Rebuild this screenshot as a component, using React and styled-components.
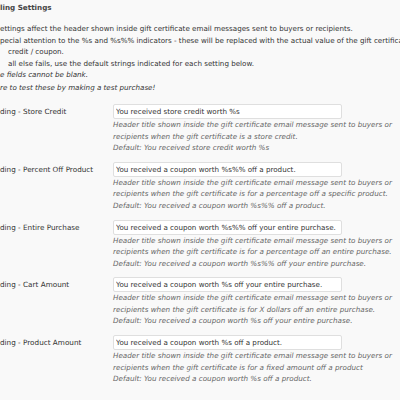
import React from 'react';
import styled, {createGlobalStyle} from 'styled-components';

const Global = createGlobalStyle`
    body {
        margin: 0;
        background: #f9f9f9;
        font-family: "DejaVu Sans", Verdana, sans-serif;
        color: #333;
        overflow: hidden;
    }
`;

const Page = styled.div`
    width: 400px;
    height: 400px;
    overflow: hidden;
    white-space: nowrap;
    padding-top: 2px;
    box-sizing: border-box;
`;

const Title = styled.h3`
    margin: 0;
    font-size: 7.2px;
    line-height: 12px;
    font-weight: bold;
    color: #464646;
`;

const Notes = styled.div`
    margin-top: 9px;
    font-size: 7.15px;
`;

const Note = styled.div`
    line-height: 11.6px;
    padding-left: ${({indent}) => indent || 0}px;
    font-style: ${({italic}) => italic ? 'italic' : 'normal'};
    margin-top: ${({gap}) => gap || 0}px;
`;

const Rows = styled.div`
    margin-top: 10px;
    display: flex;
    flex-direction: column;
    gap: 8.3px;
`;

const Row = styled.div`
    display: grid;
    grid-template-columns: 113px 1fr;
    align-items: start;
`;

const Label = styled.label`
    font-size: 7.25px;
    line-height: 15px;
    color: #333;
`;

const Field = styled.div`
    display: flex;
    flex-direction: column;
`;

const Input = styled.input`
    box-sizing: border-box;
    width: 229px;
    height: 15px;
    margin: 0;
    padding: 0 2px;
    border: 1px solid #dfdfdf;
    border-radius: 2px;
    background: #fff;
    font-family: "DejaVu Sans", Verdana, sans-serif;
    font-size: 7.15px;
    color: #333;
    outline: none;
`;

const Desc = styled.div`
    font-size: 7.2px;
    line-height: 11.5px;
    font-style: italic;
    color: #666;
`;

const rows = [
    {
        label: 'ding - Store Credit',
        value: 'You received store credit worth %s',
        line2: 'recipients when the gift certificate is a store credit.',
        def: 'Default: You received store credit worth %s',
    },
    {
        label: 'ding - Percent Off Product',
        value: 'You received a coupon worth %s%% off a product.',
        line2: 'recipients when the gift certificate is for a percentage off a specific product.',
        def: 'Default: You received a coupon worth %s%% off a product.',
    },
    {
        label: 'ding - Entire Purchase',
        value: 'You received a coupon worth %s%% off your entire purchase.',
        line2: 'recipients when the gift certificate is for a percentage off an entire purchase.',
        def: 'Default: You received a coupon worth %s%% off your entire purchase.',
    },
    {
        label: 'ding - Cart Amount',
        value: 'You received a coupon worth %s off your entire purchase.',
        line2: 'recipients when the gift certificate is for X dollars off an entire purchase.',
        def: 'Default: You received a coupon worth %s off your entire purchase.',
    },
    {
        label: 'ding - Product Amount',
        value: 'You received a coupon worth %s off a product.',
        line2: 'recipients when the gift certificate is for a fixed amount off a product',
        def: 'Default: You received a coupon worth %s off a product.',
    },
];

export default function App() {
    return (
        <Page>
            <Global/>
            <Title>ling Settings</Title>
            <Notes>
                <Note>ettings affect the header shown inside gift certificate email messages sent to buyers or recipients.</Note>
                <Note>pecial attention to the %s and %s%% indicators - these will be replaced with the actual value of the gift certificate</Note>
                <Note indent={8}>credit / coupon.</Note>
                <Note indent={8}>all else fails, use the default strings indicated for each setting below.</Note>
                <Note italic>e fields cannot be blank.</Note>
                <Note italic gap={1.5}>re to test these by making a test purchase!</Note>
            </Notes>
            <Rows>
                {rows.map(r => (
                    <Row key={r.label}>
                        <Label>{r.label}</Label>
                        <Field>
                            <Input defaultValue={r.value}/>
                            <Desc>Header title shown inside the gift certificate email message sent to buyers or</Desc>
                            <Desc>{r.line2}</Desc>
                            <Desc>{r.def}</Desc>
                        </Field>
                    </Row>
                ))}
            </Rows>
        </Page>
    );
}
